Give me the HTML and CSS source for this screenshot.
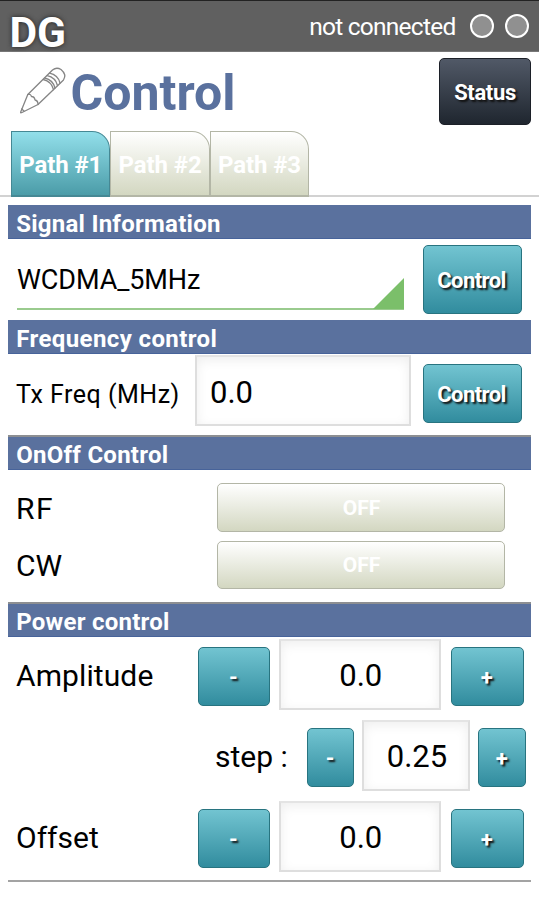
FILE: index.html
```html
<!DOCTYPE html>
<html lang="en">
<head>
<meta charset="utf-8">
<title>DG Control</title>
<link rel="stylesheet" href="styles.css">
</head>
<body>
<header class="appbar">
  <span class="brand">DG</span>
  <span class="connection">not connected</span>
  <i class="lamp"></i>
  <i class="lamp"></i>
</header>
<div class="heading">
  <svg class="pencil" width="50" height="50" viewBox="0 0 50 50" fill="none" stroke="#858585" stroke-width="1.3" stroke-linejoin="round" stroke-linecap="round">
    <path d="M2.700 46 L9.800 28.500 L34.500 4 Q38.500 0.800 43 3.500 Q49 8.500 45.500 14 L20 38.500 L4 46.500 Q2.200 47.500 2.700 46Z"/>
    <path d="M9.800 28.500 Q12.500 27.500 13.500 30.500 Q16.500 30.500 17 34 Q20 34.500 20 38.500 M3.700 43 L6 45"/>
    <path d="M25.300 13.500 Q33.500 15.500 35.500 23.500 M26.800 12 Q35 14 37 22 M29.200 9.700 Q37.500 11.500 39.500 19.500 M31.500 7.200 Q40 9 42 17"/>
  </svg>
  <h1 class="title">Control</h1>
  <button class="btn dark">Status</button>
</div>
<nav class="tabs">
  <button class="tab active">Path #1</button>
  <button class="tab">Path #2</button>
  <button class="tab">Path #3</button>
</nav>
<main class="panel">
  <h2 class="bar">Signal Information</h2>
  <div class="row signal">
    <div class="spinner"><span>WCDMA_5MHz</span><svg class="corner" width="31" height="31" viewBox="0 0 31 31"><path d="M31 0V31H0Z" fill="#7bbf6a"/></svg></div>
    <button class="btn tall">Control</button>
  </div>
  <h2 class="bar frequency">Frequency control</h2>
  <div class="row freq">
    <span class="label small">Tx Freq (MHz)</span>
    <div class="field left">0.0</div>
    <button class="btn">Control</button>
  </div>
  <h2 class="bar lined">OnOff Control</h2>
  <div class="switches">
    <span class="label rf">RF</span><button class="toggle">OFF</button>
    <span class="label">CW</span><button class="toggle">OFF</button>
  </div>
  <h2 class="bar lined">Power control</h2>
  <div class="row power">
    <span class="label amp">Amplitude</span>
    <button class="btn minus">-</button>
    <div class="field">0.0</div>
    <button class="btn plus">+</button>
  </div>
  <div class="row power step">
    <span class="label">step :</span>
    <button class="btn minus">-</button>
    <div class="field">0.25</div>
    <button class="btn plus">+</button>
  </div>
  <div class="row power offset">
    <span class="label">Offset</span>
    <button class="btn minus">-</button>
    <div class="field">0.0</div>
    <button class="btn plus">+</button>
  </div>
</main>
</body>
</html>
```
FILE: styles.css
```css
* { box-sizing: border-box; }
body {
  margin: 0;
  width: 540px;
  height: 922px;
  overflow: hidden;
  background: #fff;
  color: #000;
  font-family: Roboto, sans-serif;
}
button { font-family: inherit; margin: 0; padding: 0; white-space: nowrap; }
h1, h2 { margin: 0; white-space: nowrap; }

.appbar {
  display: flex;
  align-items: center;
  width: 539px;
  height: 52px;
  padding-right: 10.500px;
  background: #606060;
  border-top: 1px solid #222;
  border-bottom: 1px solid #777;
  color: #fff;
}
.brand {
  flex: 1;
  padding: 13px 0 0 9.500px;
  font-size: 42.500px;
  line-height: 42px;
  font-weight: 700;
  text-shadow: 0 0 5px #222;
}
.connection {
  margin-right: 14px;
  padding-top: 2px;
  font-size: 24.500px;
  line-height: 30px;
  letter-spacing: -0.75px;
}
.lamp {
  width: 24px;
  height: 24px;
  border: 2px solid #fff;
  border-radius: 50%;
  background: #909090;
}
.lamp + .lamp { margin-left: 11px; }

.heading {
  display: flex;
  height: 79px;
  padding: 6px 9px 0 18px;
}
.pencil { margin-top: 8px; }
.title {
  flex: 1;
  margin-left: 2.500px;
  padding-top: 7px;
  font-size: 50px;
  line-height: 56px;
  letter-spacing: 0;
  color: #5a719e;
}

.btn {
  flex: none;
  width: 99px;
  height: 59px;
  padding: 1px 1px 0 0;
  border: 1px solid #287480;
  border-radius: 5px;
  background: linear-gradient(#72c4d1, #318c9e);
  color: #fff;
  font-size: 22px;
  font-weight: 700;
  letter-spacing: -0.6px;
  text-shadow: 2px 2px 2px #111;
}
.btn.dark {
  width: 92px;
  height: 67px;
  padding: 2px 0 0;
  border-color: #1c2028;
  background: linear-gradient(#515967, #1f262f);
  letter-spacing: -0.35px;
}
.btn.tall { height: 69px; }

.tabs {
  display: flex;
  width: 539px;
  height: 66px;
  padding-left: 11px;
  background: linear-gradient(#d2d2d2, #d2d2d2) 0 100% / 100% 2px no-repeat;
}
.tab {
  width: 99.400px;
  height: 66px;
  padding-top: 3px;
  border: 1px solid #b3b6a6;
  border-bottom-width: 2px;
  border-radius: 0 18px 0 0;
  background: linear-gradient(#fff, #d3d7c1);
  color: #fff;
  font-size: 24px;
  font-weight: 700;
  letter-spacing: -0.1px;
}
.tab.active { border-color: #458894; background: linear-gradient(#92dfea, #4b9ca8); }

.panel { width: 523px; margin: 8px 0 0 7.500px; }
.bar {
  height: 34px;
  padding-left: 8.700px;
  background: #5a719e;
  border-bottom: 1px solid #47639a;
  color: #fff;
  font-size: 24px;
  line-height: 38px;
  letter-spacing: 0.25px;
}
.bar.frequency { letter-spacing: 0.4px; }
.bar.lined { height: 35px; border-top: 2px solid #8d8f92; line-height: 36px; }
.row { display: flex; }
.signal { height: 81px; padding: 6px 9px 0 9.500px; justify-content: space-between; }
.spinner {
  display: flex;
  justify-content: space-between;
  width: 387px;
  height: 65px;
  border-bottom: 2px solid #9acb8e;
  font-size: 27px;
  line-height: 70px;
  letter-spacing: -0.1px;
}
.corner { align-self: flex-end; margin-bottom: -1px; }

.label { font-size: 30px; line-height: 36px; white-space: pre; }
.field {
  flex: none;
  height: 71px;
  border: 2px solid #dedede;
  border-top-color: #e4e4e4;
  background: #fff;
  box-shadow: inset 0 3px 12px #eee;
  font-size: 31px;
  line-height: 71px;
  text-align: center;
  text-indent: 2px;
}
.power .field { line-height: 70px; }
.freq { height: 81px; padding: 1px 9px 0 8.500px; }
.freq .label { width: 178.500px; padding-top: 22px; font-size: 25px; letter-spacing: 0.5px; }
.freq .field { width: 216px; padding-left: 11.500px; text-align: left; }
.freq .btn { margin: 9px 0 0 12px; }

.switches {
  display: grid;
  grid-template-columns: 200.500px 288px;
  row-gap: 9px;
  height: 132px;
  padding: 13px 0 0 8.500px;
  align-content: start;
  grid-auto-rows: 48.500px;
}
.switches .label { line-height: 50px; }
.switches .rf { letter-spacing: 1.5px; line-height: 52px; }
.toggle {
  height: 48.500px;
  padding: 1px 0 0 2px;
  border: 1px solid #b3b6a6;
  border-radius: 5px;
  background: linear-gradient(#fff, #d3d7c1);
  color: #fff;
  font-size: 21px;
  font-weight: 700;
}

.power { height: 81px; padding: 2px 0 0 8.500px; }
.power .label { width: 181.500px; padding-top: 19px; }
.power .amp { letter-spacing: 0.1px; }
.power .btn { width: 72px; margin-top: 8px; }
.power .btn.plus { width: 73px; }
.power .field { width: 161.500px; margin: 0 10px 0 9.500px; }
.step .label { width: 290.500px; padding-left: 199px; }
.step .btn.minus { width: 47.500px; }
.step .btn.plus { width: 48px; }
.step .field { width: 108px; margin: 0 8px; }
.offset { border-bottom: 2px solid #a3a3a3; height: 83px; }
```
